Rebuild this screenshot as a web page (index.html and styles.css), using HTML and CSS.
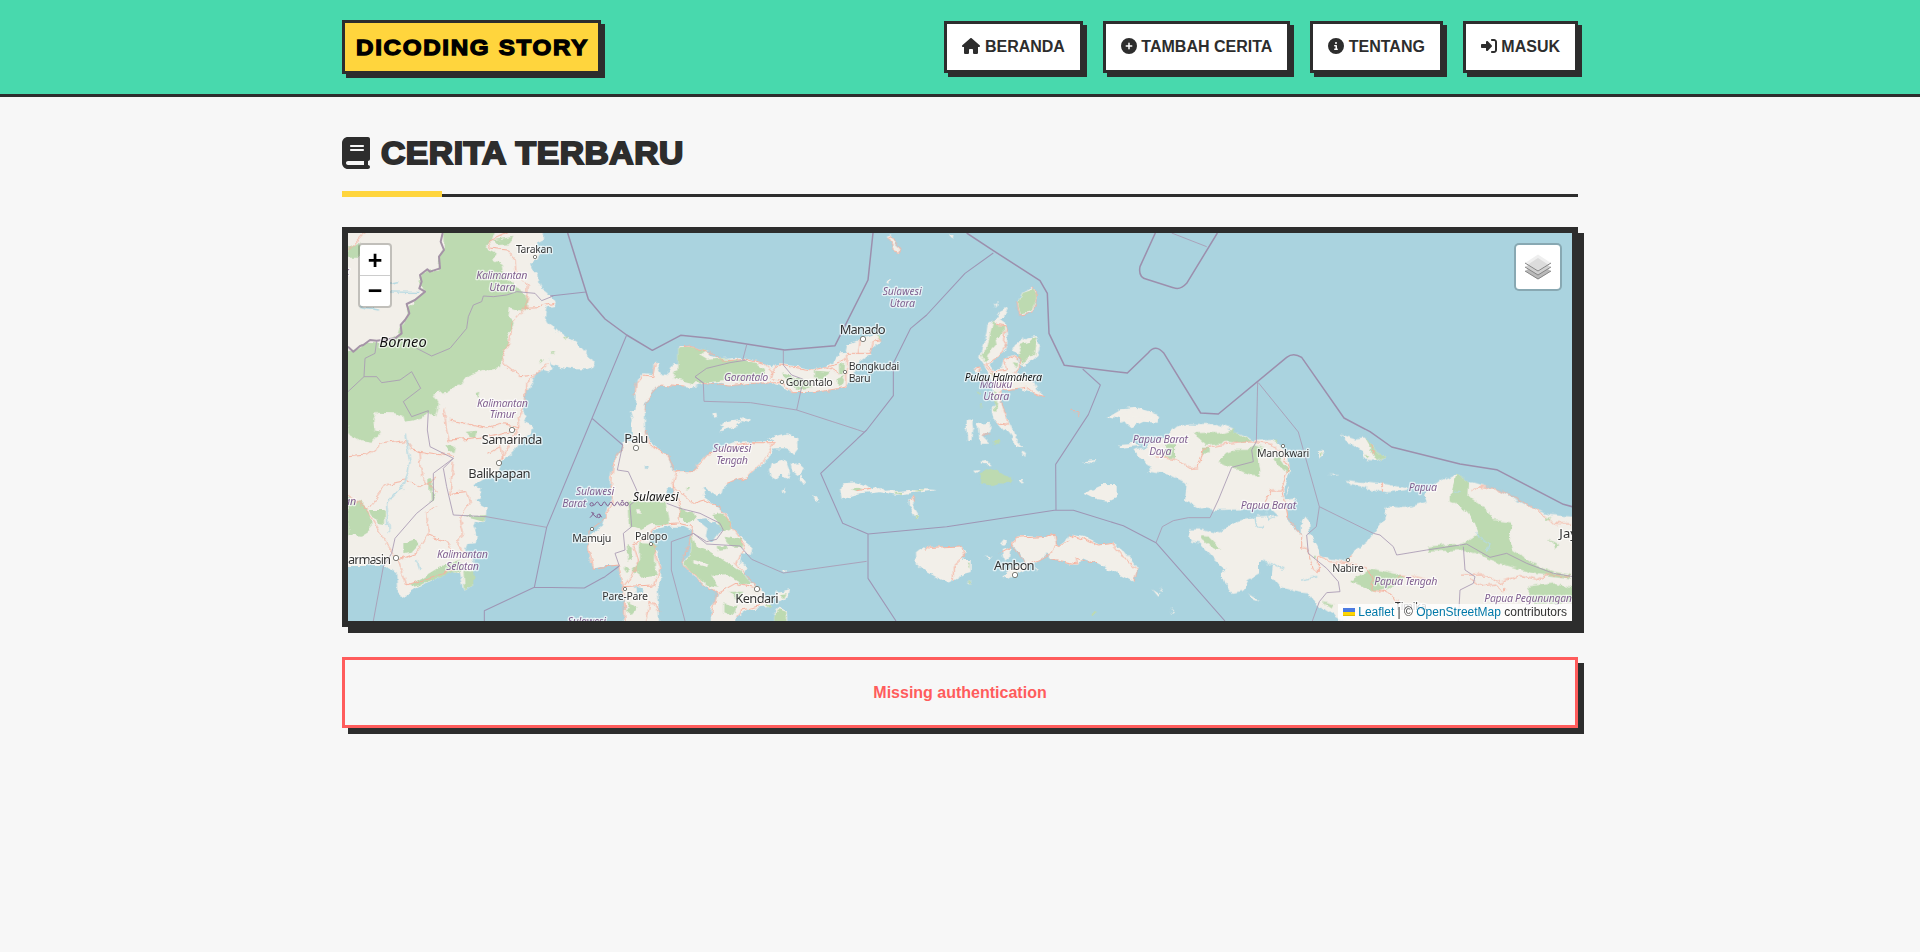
FILE: index.html
```html
<!DOCTYPE html>
<html lang="id">
<head>
<meta charset="utf-8">
<title>Dicoding Story</title>
<link rel="stylesheet" href="styles.css">
</head>
<body>
<header class="header">
  <div class="container header-inner">
    <a class="logo"><span class="logo-text">DICODING STORY</span></a>
    <nav class="nav">
      <a class="nav-link"><svg class="icon icon-wide" viewBox="0 0 576 512"><path d="M575.8 255.5c0 18-15 32.1-32 32.1l-32 0 .7 160.2c0 2.7-.2 5.4-.5 8.1l0 16.2c0 22.1-17.9 40-40 40l-16 0c-1.1 0-2.2 0-3.3-.1c-1.4 .1-2.8 .1-4.2 .1L416 512l-24 0c-22.1 0-40-17.9-40-40l0-24 0-64c0-17.7-14.3-32-32-32l-64 0c-17.7 0-32 14.3-32 32l0 64 0 24c0 22.1-17.9 40-40 40l-24 0-31.9 0c-1.5 0-3-.1-4.5-.2c-1.2 .1-2.4 .2-3.6 .2l-16 0c-22.1 0-40-17.9-40-40l0-112c0-.9 0-1.9 .1-2.8l0-69.7-32 0c-18 0-32-14-32-32.1c0-9 3-17 10-24L266.4 8c7-7 15-8 22-8s15 2 21 7L564.8 231.5c8 7 12 15 11 24z"/></svg> BERANDA</a>
      <a class="nav-link"><svg class="icon" viewBox="0 0 512 512"><path d="M256 512A256 256 0 1 0 256 0a256 256 0 1 0 0 512zM232 344l0-64-64 0c-13.3 0-24-10.7-24-24s10.7-24 24-24l64 0 0-64c0-13.3 10.7-24 24-24s24 10.7 24 24l0 64 64 0c13.3 0 24 10.7 24 24s-10.7 24-24 24l-64 0 0 64c0 13.3-10.7 24-24 24s-24-10.7-24-24z"/></svg> TAMBAH CERITA</a>
      <a class="nav-link"><svg class="icon" viewBox="0 0 512 512"><path d="M256 512A256 256 0 1 0 256 0a256 256 0 1 0 0 512zM216 336l24 0 0-64-24 0c-13.3 0-24-10.7-24-24s10.7-24 24-24l48 0c13.3 0 24 10.7 24 24l0 88 8 0c13.3 0 24 10.7 24 24s-10.7 24-24 24l-80 0c-13.3 0-24-10.7-24-24s10.7-24 24-24zm40-208a32 32 0 1 1 0 64 32 32 0 1 1 0-64z"/></svg> TENTANG</a>
      <a class="nav-link"><svg class="icon" viewBox="0 0 512 512"><path d="M217.9 105.9L340.7 228.7c7.2 7.2 11.3 17.1 11.3 27.3s-4.1 20.1-11.3 27.3L217.9 406.1c-6.4 6.4-15 9.9-24 9.9c-18.7 0-33.9-15.2-33.9-33.9l0-62.1L32 320c-17.7 0-32-14.3-32-32l0-64c0-17.7 14.3-32 32-32l128 0 0-62.1c0-18.7 15.2-33.9 33.9-33.9c9 0 17.6 3.6 24 9.9zM352 416l64 0c17.7 0 32-14.3 32-32l0-256c0-17.7-14.3-32-32-32l-64 0c-17.7 0-32-14.3-32-32s14.3-32 32-32l64 0c53 0 96 43 96 96l0 256c0 53-43 96-96 96l-64 0c-17.7 0-32-14.3-32-32s14.3-32 32-32z"/></svg> MASUK</a>
    </nav>
  </div>
</header>

<main class="container main">
  <h1 class="title"><svg class="title-icon" viewBox="0 0 448 512"><path d="M96 0C43 0 0 43 0 96L0 416c0 53 43 96 96 96l288 0 32 0c17.7 0 32-14.3 32-32s-14.3-32-32-32l0-64c17.7 0 32-14.3 32-32l0-320c0-17.7-14.3-32-32-32L384 0 96 0zm0 384l256 0 0 64L96 448c-17.7 0-32-14.3-32-32s14.3-32 32-32zm32-240c0-8.800 7.200-16 16-16l192 0c8.800 0 16 7.200 16 16s-7.200 16-16 16l-192 0c-8.800 0-16-7.200-16-16zm16 48l192 0c8.800 0 16 7.200 16 16s-7.200 16-16 16l-192 0c-8.800 0-16-7.200-16-16s7.200-16 16-16z"/></svg><span class="title-text">CERITA TERBARU</span></h1>

  <section class="map">
    <svg class="map-canvas" viewBox="24 39 3672 1164">
      <defs>
        <filter id="rough" filterUnits="userSpaceOnUse" x="0" y="0" width="3750" height="1250" color-interpolation-filters="sRGB">
          <feTurbulence type="fractalNoise" baseFrequency=".035" numOctaves="3" seed="4"/>
          <feDisplacementMap in="SourceGraphic" scale="20" xChannelSelector="R" yChannelSelector="G"/>
        </filter>
      </defs>
      <g filter="url(#rough)">
        <!-- Borneo -->
        <path class="land" d="M-20 0H610L612 60 588 72 600 100 590 125 570 130 578 150 592 165 595 185 605 205 622 217 640 235 647 245 640 258 620 262 615 290 625 310 640 320 660 340 680 355 700 365 720 378 735 395 750 412 768 422 760 440 740 448 700 448 660 440 635 430 628 412 636 440 630 455 610 450 590 460 575 490 562 510 557 540 548 570 560 590 552 606 580 618 575 640 550 660 530 675 520 695 500 715 485 730 470 760 440 775 400 797 424 805 420 830 405 838 425 858 440 865 438 885 430 910 405 905 400 920 410 945 408 970 385 972 378 990 400 1020 397 1060 400 1095 375 1115 365 1080 360 1055 330 1060 280 1080 230 1100 185 1130 175 1130 172 1060 140 1035H-20Z"/>
        <g class="forest">
          <path d="M308 0H480L455 60 440 75 450 90 470 100 460 120 485 135 490 165 520 200 560 220 562 262 545 272 510 262 505 290 525 310 515 330 500 340 510 370 485 410 480 440 430 450 385 465 365 490 325 515 280 520 295 545 290 570 285 590 265 575 250 590 225 600 195 605 190 588 165 580 110 578 100 600 105 630 80 628 0 610V395L40 392 85 365 135 368 175 345 185 315 205 290 200 260 255 215 238 190 245 160 295 148 300 110 312 90Z"/>
          <path d="M24 600L80 600 100 630 120 635 95 665 60 660 24 640ZM24 830 60 850 90 880 92 930 60 950 24 945ZM88 870H135V915L115 912 100 890ZM190 970 225 958 238 970 215 995 190 1000ZM265 772H275V815H265ZM268 815 285 825 270 850ZM24 80 55 65 75 85 70 110 24 110ZM460 60 520 50 510 70 470 72ZM320 670 345 680 340 700 325 695ZM210 1095 300 1040 360 1020 365 1050 300 1072 220 1100Z"/>
          <path d="M370 1050 400 1055V1095L375 1112ZM375 890 440 885 430 905ZM378 635 410 632 405 655 385 650ZM405 520 418 515 412 538ZM668 350 685 352 678 360ZM592 422 608 420 605 430ZM632 394 645 393 640 400Z"/>
        </g>
        <path class="road" d="M24 90 75 35M500 39 445 65 455 85 500 90 525 120 528 160 565 195 562 240 545 275 515 310 510 370 485 415 500 440 540 470 585 465 625 432M640 250 600 260 550 262M585 468 560 490 560 540 535 590 540 620 520 650 480 725M310 565 320 620 330 660 440 650 530 628M330 600 440 625 480 610 540 620M24 710 80 705 130 670 195 662 215 690 340 710M240 690 245 770 290 820M24 825 80 870 140 790 195 780 240 800 290 770M80 870 125 945 175 1020 200 1095 340 1050M175 1020 230 1000 265 940 260 880 290 860M265 945 320 965 350 1010M340 725 330 820 380 815 388 850 360 890 370 940 350 960 380 1010M445 700 480 680 490 720"/>
        <path class="river" d="M195 640 210 730 195 790 140 850 145 940M80 215 240 217M60 260 120 270M230 1020 240 1050M150 190 175 185"/>

        <!-- Sulawesi -->
        <g transform="translate(900 0)">
          <path class="land" d="M45 428 55 430 58 450 68 468 90 450 100 430 118 430 118 380 150 378 205 392 212 408 240 415 290 410 330 415 370 430 395 445 415 432 470 438 520 448 560 438 580 425 600 400 620 398 625 375 650 365 670 355 700 345 720 350 715 370 695 385 690 405 660 425 645 435 640 470 620 500 580 508 530 517 455 518 430 500 390 490 330 488 270 498 230 488 190 492 150 500 110 497 60 492 35 515 15 550 12 590 16 650-25 650-25 610-15 580-10 530-15 510-10 480 10 460 40 462 40 430Z"/>
          <path class="forest" d="M118 385 150 380 200 390 180 405 205 420 240 415 300 418 350 430 375 450 360 478 300 482 250 480 190 490 160 490 100 475 100 455 118 450ZM525 452 570 455 550 480 525 475ZM430 460 490 478 520 500 470 510 440 480ZM600 435 612 430 610 460 600 458ZM590 475 615 465 610 490 590 498ZM710 348 720 352 715 365Z"/>
          <path class="road" d="M118 380 150 378 205 395 245 420 320 415 370 430 400 460 395 475 425 482 455 518 530 517 620 500 620 410M395 460 415 435 520 450 560 440 600 460M565 440 600 430 625 400 690 400 700 365 720 362M190 490 270 498 330 490 425 488M130 498 60 492 25 530 10 590M660 360 655 400M45 430 38 470 10 465-12 490-15 530"/>
        </g>
        <g transform="translate(660 600)">
          <path class="land" d="M210-30 255-30 255 40 270 70 300 90 325 105 335 145 355 155 400 155 420 125 450 95 520 70 580 65 640 62 625 55 680 40 715 55 715 85 700 105 680 85 640 85 625 115 590 145 560 170 510 185 490 200 485 220 465 228 430 205 428 225 455 245 490 275 510 300 520 330 555 365 580 385 575 405 545 400 540 430 560 440 550 460 575 490 605 505 612 530 640 560 600 565 560 570 530 590 525 630 450 630 455 560 475 520 440 500 400 470 375 440 365 430 390 405 395 350 400 335 370 320 330 320 290 330 270 345 270 370 295 400 300 440 300 480 290 510 295 560 298 630 190 630 195 560 190 510 180 470 175 435 140 435 100 445 90 420 85 380 95 340 125 320 135 290 150 250 155 220 150 180 160 125 185 90 190 70 215 60 225 30Z"/>
          <path class="water" d="M410 295 435 292 485 325 455 365 435 350 440 320ZM318 205 340 205 342 225 320 225ZM255 138H262V146H255ZM225 500 250 505 248 520 228 515Z"/>
          <path class="forest" d="M205 245 320 248 330 315 275 312 240 330 210 320ZM358 262 400 275 410 290 385 305 355 290ZM460 285 485 280 515 310 510 332 480 325ZM498 350 545 360 550 380 520 380 498 370ZM395 345 410 380 450 395 490 420 540 450 575 492 550 495 500 465 460 470 475 500 440 495 400 465 370 430 392 405ZM200 372 215 380 215 420 205 425ZM240 370 285 372V445L290 465 240 470 215 450 240 420ZM190 435 210 450 200 460ZM205 545 232 565 215 585 198 570ZM490 550 530 560 515 590 490 580ZM510 515 550 515 535 545ZM472 378 495 380 498 390 478 392ZM375 203 388 205 380 213Z"/>
          <path class="land" d="M228 265 240 265 238 282 230 280ZM400 420 445 430 440 440 400 430Z"/>
          <path class="road" d="M190 75 160 125 152 220 160 250 130 300 90 330 85 380 100 445 175 435 190 500 195 603M255 30 265 75 325 105 345 155 400 155 450 95 580 68 640 68 620 110 560 170 500 190M350 155 338 195 400 250 435 240 480 260 520 330 555 380 530 430 580 490 605 515M338 195 355 260 355 310 400 320 395 345 365 430 430 495 475 520 530 490 580 505M220 375 270 345 290 318 350 312M220 375 235 420 220 460 190 500 280 495 300 450 280 375M260 603 270 540 300 580M470 520 455 590M530 590 545 570 610 555"/>
          <path class="land" d="M630 150 635 130 665 120 680 130 690 155 685 180 665 165 650 178 635 170ZM695 130 720 125 733 150 718 168 700 155ZM725 165 740 185 730 195 720 180ZM665 210 675 202 672 220ZM475 35 500 15 530 10 535 18 500 28ZM755 225 770 232 778 245 765 240ZM650 515 690 508 685 530 660 545 645 530ZM640 580 655 562 680 575 682 610 640 610ZM665 450 680 448 678 458Z"/>
          <path class="forest" d="M640 585 655 568 675 575 680 610 640 610ZM660 522 680 520 672 535ZM620 555 640 555 635 565Z"/>
          <path class="land" d="M840 205 845 190 890 187 920 197 935 208 960 200 975 215 1020 212 1080 207 1130 210 1080 217 1010 224 960 217 900 223 870 232 845 238ZM1048 235 1062 232 1065 250 1060 260 1075 285 1073 298 1062 290 1050 260Z"/>
          <path class="forest" d="M870 212 890 203 908 208 890 216ZM1055 213 1095 208 1080 215ZM1062 280 1075 285 1072 297 1063 293ZM1005 215H1025V221H1005Z"/>
          <path class="road" d="M1048 240 1062 232 1066 248M890 215 930 208"/>
        </g>
        <path class="land" d="M1140 620 1165 605 1200 600 1210 592 1232 598 1230 606 1205 600 1190 615 1160 622ZM1120 580 1132 578 1134 588 1122 590ZM1640 50 1655 45 1665 70 1682 85 1675 98 1660 92 1655 72ZM1638 182 1650 180 1648 195 1640 192ZM1828 39 1840 39 1838 50Z"/>
        <path class="road" d="M1644 55 1655 50 1665 65 1682 85 1675 97 1660 92 1655 72Z"/>

        <!-- Halmahera and the Moluccas -->
        <g transform="translate(1680 0)">
          <path class="land" d="M327 262 320 280 300 300 320 315 322 370 315 395 285 415 272 430 285 450 305 445 312 415 335 405 350 412 360 430 375 437 412 405 420 380 412 348 380 352 345 375 335 392 352 398 362 420 360 440 350 460 400 480 412 510 437 527 400 518 345 505 305 510 300 550 315 580 330 610 345 650 375 682 350 675 325 640 300 612 280 600 275 570 285 545 282 500 265 460 252 432 240 415 245 385 258 345 262 315 285 300 300 275ZM395 200 412 215 410 245 395 278 360 283 352 250 365 215ZM222 445 235 443 238 455 225 458ZM200 600 215 598 220 628 200 625ZM228 610 270 605 275 625 260 645 245 640ZM200 600 218 600 215 660 205 665ZM232 610 275 610 270 640 245 645 268 668 240 668ZM240 725 265 722 275 733 250 732ZM222 752 238 750 230 760ZM362 780H370V787H362ZM550 818 600 795 650 795 650 830 625 842 590 838ZM548 724 585 720 580 730ZM625 588 660 568 710 563 745 572 775 588 770 608 730 605 695 622 670 600ZM655 672 705 668 720 678 660 683ZM365 695 378 698 375 712ZM148 39 158 39 158 49ZM285 252 293 250 290 265Z"/>
          <path class="forest" d="M398 205 410 218 408 245 393 273 362 280 354 250 367 215ZM280 300 288 315 312 318 312 342 285 350 290 375 262 405 258 430 245 400 262 385 270 340ZM395 355 412 350 405 405 385 410 370 432 355 415 365 390 358 375 385 365ZM335 425 355 430 350 442ZM275 455 290 460 285 475ZM280 515 293 520 290 572 282 570ZM240 760 275 745 290 748 340 780 335 792 290 790 270 796 240 790ZM275 660 300 660 300 673 280 675ZM232 515 240 515 238 522ZM240 545 245 550 242 570Z"/>
          <path class="road" d="M395 200 412 215 410 250 395 280 360 285 350 245M285 312 320 318 310 360 320 375 305 400 275 420 262 435 285 455 320 450 312 418 335 408 360 420 362 438 345 460M255 435 300 480 310 510 380 502 400 518 437 527M302 510 302 550 325 610 290 605M222 450 232 443 235 456M514 570 530 575 536 588M245 645 270 645"/>
          <!-- Buru and Seram -->
          <path class="land" d="M48 1000 60 990 75 992 90 980 180 978 200 998 192 1020 215 1020 215 1055 190 1062 160 1080 145 1088 110 1072 80 1055 50 1030ZM250 1010 275 1010 268 1020ZM300 975 312 960 322 965 310 977ZM305 990 335 980 330 1010 312 1025ZM335 970 345 955 370 948 430 950 465 943 468 970 480 980 505 942 550 950 600 975 640 968 670 990 712 1045 705 1088 660 1065 590 1028 550 1012 530 1035 450 1015 440 1000 400 1032 380 1030 350 985ZM310 1065 340 1040 385 1030 370 1050 320 1077ZM200 1085 215 1085 212 1094ZM780 1102 788 1115 782 1118ZM757 1108 782 1125 775 1130ZM808 1160 822 1180 818 1182ZM402 1040 415 1045 410 1055Z"/>
          <path class="forest" d="M203 1028 212 1028 210 1048ZM203 1084 215 1086 212 1094ZM575 1180H588V1185H575Z"/>
          <path class="road" d="M75 995 90 982 180 978 197 1005 160 1040 160 1080M300 1000 335 980 345 955 430 950 465 943 470 975 450 1000 410 1022 380 1035 335 970M505 942 595 975 640 970 680 1020 712 1050 705 1085M590 1028 525 1012 530 1032 445 1015M470 975 480 980 505 960"/>
        </g>

        <!-- Papua -->
        <g transform="translate(2580 600)">
          <path class="land" d="M-105 50-70 20-30 10 0 12 50 12 90 25 130 45 155 62 220 60 240 75 265 110 270 150 260 190 250 210 255 240 292 235 280 250 255 258 262 300 290 330 305 345 305 310 315 295 328 310 330 340 350 375 360 410 440 425 455 400 500 365 530 325 555 290 560 262 600 265 640 258 680 245 672 225 690 205 720 182 770 160 810 185 880 205 940 235 1000 265 1050 285 1116 290 1150 290 1150 650 440 610 345 550 325 520 300 518 240 500 215 470 218 440 190 420 190 380 215 365 180 435 180 460 145 480 130 515 95 522 80 500 65 460 80 450 40 415 0 370-30 365-35 350-30 325 0 325 60 340 110 300 170 290 235 285 215 265 120 268 60 270 20 265 0 268-20 255-45 240-40 190-60 180-90 165-135 158-155 155-145 140-165 135-180 115-200 90-160 80Z"/>
          <path class="land" d="M425 45 470 58 490 55 515 75 530 95 560 108 530 122 490 118 485 90 460 72 440 68ZM435 180 520 190 555 192 620 205 625 212 560 220 520 208 450 192ZM350 90 365 90 370 105 355 115ZM388 163 420 165 400 168ZM145 520 185 545 160 540ZM265 200 270 205 258 225Z"/>
          <path class="land" d="M-240 5-215-5-180-10-140-5-130-20-210-25-240-10Z"/>
          <path class="forest" d="M-20 40 20 38 60 40 100 28 150 62 120 70 80 65 20 75ZM60 125 70 100 100 90 140 90 160 75 190 85 175 110 182 165 150 165 120 150 90 140ZM220 112 240 112 268 150 262 160 240 140ZM-105 75-75 75-75 115-105 112ZM7 80H26V100H7ZM492 55 515 75 530 95 560 108 530 120 515 95ZM770 160 810 185 808 230 860 268 880 300 935 308 925 350 940 390 990 425 1060 455 1116 465 1116 475 1000 460 900 430 840 405 790 390 680 395 680 380 790 370 835 340 820 300 780 255 755 245 755 215ZM450 485 510 445 560 455 620 470 560 505 520 512ZM980 500 1060 490 1116 505 1116 550 1000 550ZM0 348 25 350 60 385 40 385 5 360ZM365 545 400 555 395 565ZM355 95 365 98 360 110ZM218 62 232 62 230 70ZM338 408 348 408 345 418ZM495 105 508 108 500 116Z"/>
          <path class="road" d="M-130 110-70 120-30 145-5 143 10 85 60 75 150 65 210 75 240 90 268 140 250 190 245 210 215 210 195 250M245 205 260 290 305 345 305 385 320 390 340 445 355 455 355 410 390 425 440 430 458 400M440 430 500 440 515 480 520 510 570 520 580 540 600 545M550 190 550 218M515 75 520 100M820 215 840 198 880 205 960 240 1040 290 1060 310 1116 312M780 465 860 465 900 490 960 470 1010 480 1050 460 1116 470M810 475 850 500 885 495 910 520 915 500M570 490 600 465 650 470 690 480M540 510 560 515"/>
          <path class="river" d="M865 395 870 370 835 350 830 340M190 420 250 450M165 290 170 320 195 320M200 270 205 300 225 290M760 215 780 215M355 470 300 480"/>
          <path class="forest" d="M1045 355 1065 365 1078 375 1065 385 1062 372ZM1040 292H1054V300H1040Z"/>
        </g>
      </g>

      <!-- Administrative and maritime boundaries -->
      <g class="border">
        <path class="border-land" d="M308 39 302 65 312 90 297 110 300 145 270 155 262 148 240 165 245 185 238 205 255 215 225 240 200 252 208 280 195 300 182 315 185 340 165 355 110 362 90 360 70 375 60 378 40 395 24 380"/>
        <path class="thin" d="M640 228 605 242 585 220 530 215 500 225 460 230 430 228 425 245 400 255 385 290 380 325 330 385 275 408 230 385M110 362 105 400 75 415 72 470 24 515M72 470 110 470 125 488 180 480 215 455 242 505 190 545 215 590 265 572 262 630 270 680 310 700 340 715 310 745 320 800 340 885 438 890 620 922M340 715 280 760 280 840 230 880 165 955 155 1000 130 1040 100 1203"/>
        <path class="thick" d="M683 39 745 238 795 297 860 345 937 391 1022 346 1110 355 1334 390 1485 377 1584 180 1599 39"/>
        <path class="mid" d="M630 228 738 216M860 345 620 922 583 1102 433 1172 433 1203M755 594 848 675M583 1102 733 1104 795 1070 838 1038"/>
        <path class="thin" d="M848 675 832 750 865 755 890 810 895 835 870 855 875 920 850 940 855 990 825 1000 838 1038M980 850 1020 865 1080 880 1140 910 1150 930 1130 958 1100 965 1060 940M1035 1203 994 1050 994 965 1050 945 1060 940 1100 972 1200 978 1235 1018 1330 1059 1580 1024M1065 470 1090 490 1092 544 1232 548 1370 570 1552 629 1572 636M1092 490 1065 470 1100 445 1170 428 1220 420M1208 420 1220 375M1330 390 1330 435 1355 465 1390 478 1370 570"/>
        <path class="mid" d="M1960 99 1875 160 1760 285 1712 325 1660 430 1660 527 1580 630 1442 760 1508 910 1584 942 1584 1075 1668 1203M1584 942 1820 920 2148 870 2200 871 2350 917 2448 968 2655 1203M2148 870 2147 733 2245 584 2281 495 2228 447"/>
        <path class="thick" d="M1880 39 1960 92 2100 182 2122 220 2127 340 2173 436 2362 459 2425 398Q2447 370 2472 400L2582 579 2635 582 2840 412Q2860 396 2885 412L3012 594 3090 635 3155 681 3360 732 3470 749 3670 853 3700 861M2446 39 2400 140Q2394 172 2420 178L2500 203Q2520 212 2540 190L2632 39"/>
        <path class="thin" d="M2495 39 2600 80M2753 486 2749 665 2735 690 2740 725 2675 742 2635 840 2610 893 2545 893 2500 902 2467 920 2448 968M2755 488 2875 636 2938 860 3100 940 3120 945 3160 980 3170 1005 3260 990 3380 972 3450 1012 3500 1000 3560 1030 3640 1060 3700 1070M2938 860 2929 920 2900 945 2905 1000 2960 1045 2995 1085 3000 1115 2960 1118 2938 1145 2917 1203M3370 980 3375 1050 3405 1070 3400 1090 3360 1110 3355 1203"/>
      </g>

      <g class="markers">
        <circle cx="585" cy="111" r="5"/><circle cx="516" cy="630" r="8"/><circle cx="477" cy="729" r="8"/><circle cx="168" cy="1014" r="8"/><circle cx="888" cy="684" r="8"/><circle cx="756" cy="927" r="5"/><circle cx="933" cy="972" r="5"/><circle cx="855" cy="1107" r="5"/><circle cx="1251" cy="1107" r="8"/><circle cx="1569" cy="357" r="8"/><circle cx="1326" cy="486" r="5"/><circle cx="1515" cy="456" r="5"/><circle cx="2025" cy="1065" r="8"/><circle cx="2829" cy="678" r="5"/><circle cx="3024" cy="1020" r="5"/>
      </g>

      <g class="region">
        <text x="409" y="177" textLength="153">Kalimantan</text><text x="448" y="213" textLength="78">Utara</text>
        <text x="411" y="560" textLength="153">Kalimantan</text><text x="449" y="595" textLength="78">Timur</text>
        <text x="291" y="1013" textLength="153">Kalimantan</text><text x="319" y="1049" textLength="98">Selatan</text>
        <text x="708" y="824" textLength="115">Sulawesi</text><text x="667" y="860" textLength="72">Barat</text>
        <text x="683" y="1214" textLength="115">Sulawesi</text>
        <text x="1119" y="697" textLength="115">Sulawesi</text><text x="1129" y="732" textLength="95">Tengah</text>
        <text x="1628" y="225" textLength="117">Sulawesi</text><text x="1649" y="261" textLength="76">Utara</text>
        <text x="1152" y="484" textLength="133">Gorontalo</text>
        <text x="1919" y="503" textLength="98">Maluku</text><text x="1930" y="540" textLength="78">Utara</text>
        <text x="2378" y="670" textLength="166">Papua Barat</text><text x="2428" y="706" textLength="67">Daya</text>
        <text x="2702" y="866" textLength="167">Papua Barat</text><text x="3206" y="814" textLength="85">Papua</text>
        <text x="3103" y="1095" textLength="189">Papua Tengah</text><text x="3433" y="1145" textLength="263">Papua Pegunungan</text>
        <text x="12" y="164">k</text><text x="12" y="854">an</text>
      </g>
      <g class="script">
        <circle cx="755" cy="853" r="5"/><path d="M760 856C766 858 766 846 772 846S776 857 783 857 787 846 793 846 797 857 803 857 808 846 813 846 817 857 823 857 827 846 832 846 836 857 841 857"/><circle cx="847" cy="851" r="5"/><circle cx="860" cy="852" r="5"/><path d="M844 842H850"/>
        <path d="M750 893 762 880 754 877M756 880 770 893"/><circle cx="776" cy="888" r="5"/><path d="M778 881 785 892"/>
      </g>
      <g class="place">
        <text x="118" y="380" class="large" textLength="142">Borneo</text>
        <text x="879" y="843" textLength="137">Sulawesi</text>
        <text x="1874" y="482" textLength="232" class="small">Pulau Halmahera</text>
      </g>
      <g class="city">
        <text x="425" y="672" textLength="182">Samarinda</text><text x="385" y="773" textLength="187">Balikpapan</text>
        <text x="24" y="1031" textLength="129">armasin</text><text x="853" y="669" textLength="72">Palu</text>
        <text x="1186" y="1149" textLength="130">Kendari</text><text x="1499" y="342" textLength="138">Manado</text>
        <text x="1962" y="1051" textLength="122">Ambon</text><text x="3658" y="955">Jay</text>
      </g>
      <g class="city town">
        <text x="528" y="98" textLength="110">Tarakan</text><text x="697" y="967" textLength="117">Mamuju</text>
        <text x="885" y="959" textLength="97">Palopo</text><text x="787" y="1141" textLength="137">Pare-Pare</text>
        <text x="1337" y="499" textLength="141">Gorontalo</text><text x="1526" y="450" textLength="152">Bongkudai</text><text x="1526" y="486" textLength="66">Baru</text>
        <text x="2751" y="711" textLength="157">Manokwari</text><text x="2977" y="1055" textLength="94">Nabire</text><text x="3165" y="1170" textLength="95">Timika</text>
      </g>
    </svg>

    <div class="zoom-control"><a class="zoom-button">+</a><a class="zoom-button zoom-out">−</a></div>
    <div class="layers-control">
      <svg class="layers-icon" viewBox="0 0 26 26">
        <path fill="#b9b9b9" d="M0 17l13-8 13 8-13 8.300z"/><path fill="none" stroke="#858585" d="M0 17l13 8 13-8"/>
        <path fill="#d0d0d0" d="M0 13l13-8 13 8-13 8z"/><path fill="none" stroke="#858585" d="M0 13l13 8 13-8"/>
        <path fill="#efefef" d="M0 9l13-8.500L26 9l-13 8z"/><path fill="#dcdcdc" d="M3 10.500l10-6.500 10 6.500-10 6z"/><path fill="none" stroke="#858585" d="M0 9l13 8 13-8"/>
      </svg>
    </div>
    <div class="attribution"><svg class="flag" viewBox="0 0 12 8"><path fill="#4C7BE1" d="M0 0h12v4H0z"/><path fill="#FFD500" d="M0 4h12v3H0z"/><path fill="#E0BC00" d="M0 7h12v1H0z"/></svg> <a class="map-link">Leaflet</a> | © <a class="map-link">OpenStreetMap</a> contributors</div>
  </section>

  <div class="alert">Missing authentication</div>
</main>
</body>
</html>
```
FILE: styles.css
```css
* { box-sizing: border-box; }
body {
  margin: 0;
  min-height: 100vh;
  background: #f7f7f7;
  color: #2d2d2d;
  font-family: "Liberation Sans", Arial, sans-serif;
  font-size: 16px;
}
.container { width: 1236px; margin: 0 auto; }
.header { height: 97px; background: #48d9ad; border-bottom: 3px solid #2d2d2d; }
.header-inner { display: flex; justify-content: space-between; align-items: center; height: 94px; }
.logo {
  display: flex;
  align-items: center;
  width: 259px;
  height: 54px;
  padding: 2px 0 0 11px;
  background: #ffd53d;
  border: 3px solid #2d2d2d;
  box-shadow: 4px 4px 0 #2d2d2d;
  color: #000;
  font-size: 22.5px;
  font-weight: 900;
  letter-spacing: 1.55px;
  white-space: nowrap;
  -webkit-text-stroke: 1.3px #000;
}
.logo-text { transform: scaleX(1.075); transform-origin: left; }
.nav { display: flex; gap: 20px; }
.nav-link {
  height: 52px;
  padding: 0 15px;
  background: #fff;
  border: 3px solid #2d2d2d;
  box-shadow: 4px 4px 0 #2d2d2d;
  font-weight: 700;
  line-height: 46px;
  white-space: nowrap;
}
.icon { width: 16px; height: 16px; fill: #2d2d2d; vertical-align: -2px; }
.icon-wide { width: 18px; }
.main { padding-top: 32px; padding-bottom: 40px; }
.title {
  position: relative;
  display: flex;
  align-items: center;
  gap: 11px;
  height: 68px;
  margin: 0 0 30px;
  padding-bottom: 17px;
  border-bottom: 3px solid #2d2d2d;
  font-size: 31px;
  font-weight: 900;
  line-height: 48px;
}
.title-icon { width: 28px; height: 32px; fill: #2d2d2d; }
.title-text {
  padding-top: 2px;
  letter-spacing: .5px;
  -webkit-text-stroke: 1.9px #2d2d2d;
  transform: scaleX(1.085);
  transform-origin: left;
}
.title::after {
  content: "";
  position: absolute;
  left: 0;
  bottom: -3px;
  width: 100px;
  height: 6px;
  background: #ffd53d;
}
.map {
  position: relative;
  height: 400px;
  border: 6px solid #2d2d2d;
  box-shadow: 6px 6px 0 #2d2d2d;
  background: #aad3df;
}
.map-canvas { display: block; width: 1224px; height: 388px; }
.land { fill: #f2efe9; }
.water { fill: #aad3df; }
.forest { fill: #bddab1; }
.road { fill: none; stroke: #f7b29f; stroke-width: 3; stroke-linejoin: round; }
.river { fill: none; stroke: #b5dae3; stroke-width: 4; }
.border { fill: none; stroke: #9c8fad; stroke-linejoin: round; }
.border-land { stroke: #a593a7; stroke-width: 6; }
.thick { stroke-width: 4.5; }
.mid { stroke-width: 3.2; stroke: #9e96b5; }
.thin { stroke-width: 2.6; stroke: #a99ab4; }
.markers { fill: #fff; stroke: #676760; stroke-width: 2.5; }
.region, .place, .city {
  font-family: "Noto Sans", sans-serif;
  paint-order: stroke;
  stroke: rgba(255, 255, 255, .65);
  stroke-width: 8;
  stroke-linejoin: round;
}
.region { fill: #806090; font-size: 32px; font-style: italic; }
.place { fill: #111; font-size: 36px; font-style: italic; }
.large { font-size: 44px; }
.small { font-size: 32px; }
.city { fill: #333; font-size: 39px; }
.town { font-size: 32px; }
.script { fill: none; stroke: #806090; stroke-width: 3; }
.zoom-control {
  position: absolute;
  top: 10px;
  left: 10px;
  width: 34px;
  border: 2px solid rgba(0, 0, 0, .2);
  border-radius: 4px;
  background: #fff;
  background-clip: padding-box;
}
.zoom-button {
  display: block;
  height: 30px;
  color: #000;
  font: bold 25px/30px "Liberation Sans", sans-serif;
  text-align: center;
}
.zoom-out { height: 31px; border-top: 1px solid #ccc; line-height: 28px; }
.layers-control {
  position: absolute;
  top: 10px;
  right: 10px;
  display: grid;
  place-items: center;
  width: 48px;
  height: 48px;
  border: 2px solid rgba(0, 0, 0, .2);
  border-radius: 5px;
  background: #fff;
  background-clip: padding-box;
}
.layers-icon { width: 26px; height: 26px; }
.attribution {
  position: absolute;
  right: 0;
  bottom: 0;
  height: 17px;
  padding: 0 5px;
  background: rgba(255, 255, 255, .8);
  color: #333;
  font-size: 12px;
  line-height: 16.8px;
  white-space: nowrap;
}
.flag { width: 12px; height: 8px; }
.map-link { color: #0078a8; }
.alert {
  height: 71px;
  margin-top: 30px;
  border: 3px solid #ff5c5c;
  box-shadow: 6px 6px 0 #2d2d2d;
  background: #f7f7f7;
  color: #ff5c5c;
  font-weight: 700;
  line-height: 66px;
  text-align: center;
}
```
